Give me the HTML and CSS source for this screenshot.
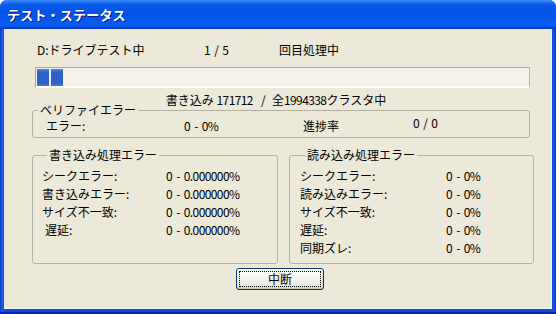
FILE: index.html
```html
<!DOCTYPE html>
<html lang="ja">
<head>
<meta charset="utf-8">
<title>テスト・ステータス</title>
<link rel="stylesheet" href="styles.css">
</head>
<body>
<div class="window">
  <div class="titlebar">テスト・ステータス</div>
  <div class="frame">
    <div class="client">
      <div class="toprow">
        <span>D:ドライブテスト中</span>
        <span class="num">1 / 5</span>
        <span>回目処理中</span>
      </div>
      <div class="progress">
        <span class="chunk"></span>
        <span class="chunk"></span>
      </div>
      <div class="status">書き込み <span class="num">171712 &nbsp;/&nbsp;</span> 全<span class="num">1994338</span>クラスタ中</div>
      <fieldset class="group verify">
        <legend>ベリファイエラー</legend>
        <div class="vrow">
          <span>エラー:</span>
          <span class="num">0 - 0%</span>
          <span>進捗率</span>
          <span class="num raised">0 / 0</span>
        </div>
      </fieldset>
      <div class="groups">
        <fieldset class="group write">
          <legend>書き込み処理エラー</legend>
          <div class="rows">
            <span>シークエラー:</span><span class="num">0 - 0.000000%</span>
            <span>書き込みエラー:</span><span class="num">0 - 0.000000%</span>
            <span>サイズ不一致:</span><span class="num">0 - 0.000000%</span>
            <span class="indent">遅延:</span><span class="num">0 - 0.000000%</span>
          </div>
        </fieldset>
        <fieldset class="group read">
          <legend>読み込み処理エラー</legend>
          <div class="rows">
            <span>シークエラー:</span><span class="num">0 - 0%</span>
            <span>読み込みエラー:</span><span class="num">0 - 0%</span>
            <span>サイズ不一致:</span><span class="num">0 - 0%</span>
            <span>遅延:</span><span class="num">0 - 0%</span>
            <span>同期ズレ:</span><span class="num">0 - 0%</span>
          </div>
        </fieldset>
      </div>
      <button class="btn" type="button"><span class="focus">中断</span></button>
    </div>
  </div>
</div>
</body>
</html>
```

FILE: styles.css
```css
html, body {
  margin: 0;
  padding: 0;
}
body {
  width: 556px;
  height: 314px;
  overflow: hidden;
  background: #ffffff;
  font-family: "Noto Sans CJK JP", "MS UI Gothic", sans-serif;
  font-size: 12px;
  color: #000;
}
.window {
  width: 556px;
  height: 314px;
  display: flex;
  flex-direction: column;
  background: #0a3fd4;
  border-radius: 7px 7px 0 0;
  overflow: hidden;
}
.titlebar {
  height: 29px;
  flex: none;
  box-sizing: border-box;
  display: flex;
  align-items: center;
  padding-left: 7px;
  padding-bottom: 1px;
  color: #fff;
  font-weight: bold;
  font-size: 13px;
  letter-spacing: 0.2px;
  text-shadow: 1px 1px 0 #0a1883;
  background: linear-gradient(to bottom,
    #3c8cf8 0%, #2a7cf6 6%, #0b5ee9 14%, #0552e6 40%,
    #0558ec 70%, #0a5ef2 86%, #0650e0 93%, #0030b8 100%);
}
.frame {
  flex: 1;
  display: flex;
  padding: 0 4px 5px 4px;
  background: linear-gradient(to right, #0631c6 0, #1a64ec 2px, #0a4fdc 4px, #0a4fdc calc(100% - 4px), #1558e6 calc(100% - 2px), #062fb8 100%);
  box-shadow: inset 0 -2px 0 #0626a8;
}
.client {
  flex: 1;
  background: #ece9d8;
  display: flex;
  flex-direction: column;
  align-items: flex-start;
  padding: 14px 0 0 28px;
  box-shadow: inset -1px -1px 0 #f4f2ea;
}
.num {
  letter-spacing: -0.6px;
  word-spacing: 2px;
}
.toprow {
  display: grid;
  grid-template-columns: 167px 75px auto;
  padding-left: 5px;
  line-height: 14px;
  height: 14px;
}
.progress {
  margin: 10px 0 0 3px;
  width: 495px;
  height: 21px;
  box-sizing: border-box;
  border: 1px solid #a8a696;
  border-bottom-color: #ffffff;
  border-right-color: #b8b6a8;
  background: #f3f1e8;
  box-shadow: inset 0 -1px 0 #fdfcf8;
  display: flex;
  gap: 2px;
  padding: 1px 0 1px 1px;
}
.chunk {
  width: 12px;
  height: 17px;
  background: linear-gradient(to bottom, #4f84dc 0, #2d63c8 3px, #2d63c8 14px, #4478d4 100%);
}
.status {
  margin-top: 6px;
  width: 488px;
  text-align: center;
  line-height: 12px;
  height: 12px;
  position: relative;
  z-index: 1;
}
.group {
  margin: 0;
  padding: 0;
  border: 1px solid #b3b1a2;
  border-radius: 3px;
  box-sizing: border-box;
  min-inline-size: 0;
}
.group legend {
  margin-left: 5px;
  padding: 0 2px;
  line-height: 12px;
  height: 12px;
}
.verify {
  margin-top: -2px;
  width: 498px;
  padding: 3px 0 4px 0;
}
.vrow {
  display: grid;
  grid-template-columns: 138px 119px 110px auto;
  padding-left: 13px;
  line-height: 14px;
  height: 14px;
}
.raised {
  margin-top: -3px;
}
.groups {
  display: flex;
  gap: 11px;
  margin-top: 11px;
  align-items: stretch;
}
.write {
  width: 246px;
  padding: 6px 0 6px 9px;
}
.read {
  width: 245px;
  padding: 6px 0 6px 10px;
}
.rows {
  display: grid;
  grid-auto-rows: 18px;
  line-height: 18px;
}
.write .rows {
  grid-template-columns: 124px auto;
}
.read .rows {
  grid-template-columns: 146px auto;
}
.indent {
  padding-left: 3px;
}
.btn {
  margin: 4px 0 0 204px;
  width: 88px;
  height: 22px;
  padding: 2px;
  box-sizing: border-box;
  border: 1px solid #003c74;
  border-radius: 3px;
  background: linear-gradient(to bottom, #ffffff 0%, #f6f5f0 40%, #ebe9e0 80%, #d6d0c5 100%);
  box-shadow: inset 0 -1px 0 #c9c4b6, inset -1px 0 0 #dcd8cc;
  font-family: "Noto Sans CJK JP", sans-serif;
  font-size: 12px;
  color: #000;
  display: flex;
}
.focus {
  flex: 1;
  border: 1px dotted #000;
  line-height: 14px;
  text-align: center;
}
```
